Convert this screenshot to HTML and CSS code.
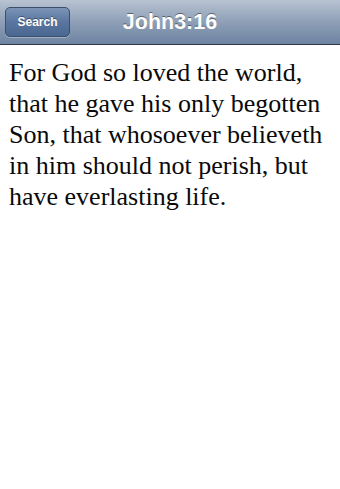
FILE: index.html
```html
<!DOCTYPE html>
<html lang="en">
  <head>
    <meta charset="UTF-8" />
    <meta name="viewport" content="width=device-width, initial-scale=1.0" />
    <title>John3:16</title>
    <link rel="stylesheet" href="styles.css">
  </head>
  <body>
    <div class="navbar">
      <button class="btn-search">Search</button>
      <h1 class="nav-title">John3:16</h1>
    </div>
    <div class="verse">
      For God so loved the world, that he gave his only begotten Son, that
      whosoever believeth in him should not perish, but have everlasting life.
    </div>
  </body>
</html>
```

FILE: styles.css
```css
body {
  margin: 0;
  background-color: #fff;
  font-family: "Liberation Sans", Arial, sans-serif;
}

.navbar {
  position: relative;
  height: 44px;
  display: flex;
  align-items: center;
  padding: 0 5px;
  background: linear-gradient(#b8c3d2, #8e9fb6 50%, #6e84a2);
  border-bottom: 1px solid #2d3642;
}

.btn-search {
  width: 65px;
  height: 30px;
  border: 1px solid #3b4e6b;
  border-radius: 5px;
  background: linear-gradient(#7b93b6, #5a76a0 50%, #4a6792);
  color: #fff;
  font-family: "Liberation Sans", Arial, sans-serif;
  font-weight: bold;
  font-size: 12px;
  text-shadow: 0 -1px 0 rgba(0, 0, 0, 0.4);
  box-shadow: 0 1px 0 rgba(255, 255, 255, 0.3);
  padding: 0;
}

/* title is centered across the whole bar */
.nav-title {
  position: absolute;
  left: 0;
  right: 0;
  margin: 0;
  text-align: center;
  color: #fff;
  font-size: 21.5px;
  font-weight: bold;
  text-shadow: 0 -1px 0 rgba(0, 0, 0, 0.45);
  pointer-events: none;
}

.verse {
  padding: 12px 9px;
  font-family: "Liberation Serif", "Times New Roman", serif;
  font-size: 26px;
  line-height: 31px;
  color: #0a0a0a;
}
```
